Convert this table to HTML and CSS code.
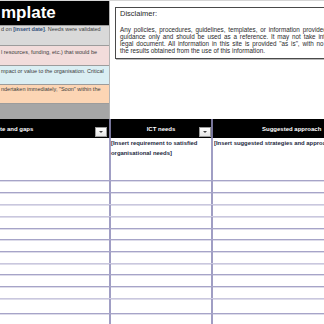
FILE: index.html
```html
<!DOCTYPE html>
<html>
<head>
<meta charset="utf-8">
<link rel="stylesheet" href="styles.css">
</head>
<body>
<div class="sheet">
  <div class="topline"></div>
  <div class="top">
    <div class="legend">
      <div class="title">mplate</div>
      <div class="lrow gray">d on <b class="ins">[insert date]</b>. Needs were validated</div>
      <div class="lrow pink">l resources, funding, etc.) that would be</div>
      <div class="lrow blue">mpact or value to the organisation. Critical</div>
      <div class="lrow orange">ndertaken immediately, "Soon" within the</div>
      <div class="lrow dark"></div>
    </div>
    <div class="aside">
      <div class="disclaimer">
        <div class="dtitle">Disclaimer:</div>
        <div class="dtext">
          <div class="dl w1">Any policies, procedures, guidelines, templates, or information provided on this site</div>
          <div class="dl w2">guidance only and should be used as a reference. It may not take into account</div>
          <div class="dl w3">legal document. All information in this site is provided "as is", with no guarantee</div>
          <div class="dl">the results obtained from the use of this information.</div>
        </div>
      </div>
    </div>
  </div>
  <div class="table">
    <div class="thead">
      <div class="hc c1"><span class="htext">te and gaps</span><span class="drop"><svg width="6" height="4" viewBox="0 0 6 4"><path d="M1 1h4L3 3z" fill="#444"/></svg></span></div>
      <div class="hc c2"><span class="htext center">ICT needs</span><span class="drop"><svg width="6" height="4" viewBox="0 0 6 4"><path d="M1 1h4L3 3z" fill="#444"/></svg></span></div>
      <div class="hc c3"><span class="htext">Suggested approach</span></div>
    </div>
    <div class="trow first">
      <div class="cell c1"></div>
      <div class="cell c2">[Insert requirement to satisfied organisational needs]</div>
      <div class="cell c3">[Insert suggested strategies and approaches]</div>
    </div>
    <div class="trow h12"><div class="cell c1"></div><div class="cell c2"></div><div class="cell c3"></div></div>
    <div class="trow h12 lite"><div class="cell c1"></div><div class="cell c2"></div><div class="cell c3"></div></div>
    <div class="trow h12 lite"><div class="cell c1"></div><div class="cell c2"></div><div class="cell c3"></div></div>
    <div class="trow h12"><div class="cell c1"></div><div class="cell c2"></div><div class="cell c3"></div></div>
    <div class="trow h11"><div class="cell c1"></div><div class="cell c2"></div><div class="cell c3"></div></div>
    <div class="trow h12"><div class="cell c1"></div><div class="cell c2"></div><div class="cell c3"></div></div>
    <div class="trow h12 lite"><div class="cell c1"></div><div class="cell c2"></div><div class="cell c3"></div></div>
    <div class="trow h11"><div class="cell c1"></div><div class="cell c2"></div><div class="cell c3"></div></div>
    <div class="trow h12"><div class="cell c1"></div><div class="cell c2"></div><div class="cell c3"></div></div>
    <div class="trow h12 lite"><div class="cell c1"></div><div class="cell c2"></div><div class="cell c3"></div></div>
    <div class="trow h15"><div class="cell c1"></div><div class="cell c2"></div><div class="cell c3"></div></div>
    <div class="trow h12"><div class="cell c1"></div><div class="cell c2"></div><div class="cell c3"></div></div>
  </div>
</div>
</body>
</html>
```

FILE: styles.css
```css
html, body {
  margin: 0;
  padding: 0;
  background: #ffffff;
}
body {
  width: 324px;
  height: 324px;
  overflow: hidden;
  font-family: "Liberation Sans", Arial, sans-serif;
}
.sheet {
  width: 324px;
}
.topline {
  height: 1px;
  background: #d6d6d6;
}
.top {
  display: flex;
  height: 118px;
}
.legend {
  flex: none;
  width: 109px;
  border-right: 1px solid #b4b4b4;
  display: flex;
  flex-direction: column;
}
.title {
  height: 24px;
  background: #000;
  color: #fff;
  font-weight: bold;
  font-size: 17px;
  line-height: 24px;
  padding-left: 1px;
  white-space: nowrap;
  overflow: hidden;
}
.lrow {
  box-sizing: border-box;
  border-top: 1px solid #9c9c9c;
  font-size: 5.5px;
  line-height: 6px;
  color: #3c3c3c;
  white-space: nowrap;
  overflow: hidden;
  padding-left: 1px;
}
.ins {
  color: #2f4d78;
}
.gray {
  height: 20px;
  background: #d9d9d9;
  padding-top: 0;
}
.pink {
  height: 20px;
  background: #f2dcdb;
  padding-top: 3px;
}
.blue {
  height: 19px;
  background: #daeef3;
  padding-top: 2px;
}
.orange {
  height: 19px;
  background: #fcd5b4;
  padding-top: 1px;
}
.dark {
  height: 16px;
  background: #a6a6a6;
}
.aside {
  flex: 1;
  min-width: 0;
  overflow: hidden;
  padding: 6px 0 0 5px;
}
.disclaimer {
  box-sizing: border-box;
  width: 240px;
  height: 52px;
  border: 1px solid #4a4a4a;
  box-shadow: 1px 1px 0 #b8b8b8;
  padding: 1px 0 0 4px;
  background: #fff;
  overflow: hidden;
}
.dtitle {
  font-size: 7.5px;
  line-height: 9px;
  color: #2a2a2a;
}
.dtext {
  margin-top: 8px;
  font-size: 6.3px;
  line-height: 7px;
  color: #2a2a2a;
}
.dl {
  white-space: nowrap;
}
.w1 { word-spacing: 1.1px; }
.w2 { word-spacing: 1.1px; }
.w3 { word-spacing: 1.1px; }

.thead {
  display: grid;
  grid-template-columns: 111px 102px 1fr;
  height: 19px;
  background: #000;
}
.hc {
  display: flex;
  align-items: center;
  font-weight: bold;
  font-size: 6px;
  color: #fff;
  white-space: nowrap;
  overflow: hidden;
}
.hc.c1, .hc.c2 {
  border-right: 2px solid #77759a;
}
.htext {
  flex: 1;
}
.htext.center {
  text-align: center;
  padding-left: 12px;
}
.hc.c1 .drop {
  margin-right: 2px;
}
.hc.c3 {
  padding-left: 49px;
}
.drop {
  flex: none;
  align-self: flex-end;
  margin-bottom: 1px;
  box-sizing: border-box;
  width: 12px;
  height: 10px;
  border: 1px solid #9a9a9a;
  background: linear-gradient(#ffffff, #e4e4e4);
  display: flex;
  align-items: center;
  justify-content: center;
}
.trow {
  box-sizing: border-box;
  display: grid;
  grid-template-columns: 111px 102px 1fr;
  border-bottom: 1px solid #a6a4c8;
  box-shadow: 0 1px 0 #dddcea;
}
.trow.lite {
  border-bottom-color: #c9c7de;
}
.cell.c1, .cell.c2 {
  border-right: 2px solid #a09ec4;
}
.first {
  height: 43px;
}
.first .cell {
  font-weight: bold;
  font-size: 5.9px;
  line-height: 10px;
  color: #1c2940;
}
.first .cell.c2 {
  padding: 0 6px 0 0;
}
.first .cell.c3 {
  padding-left: 1px;
  white-space: nowrap;
  overflow: hidden;
}
.h11 { height: 11px; }
.h12 { height: 12px; }
.h15 { height: 15px; }
```
